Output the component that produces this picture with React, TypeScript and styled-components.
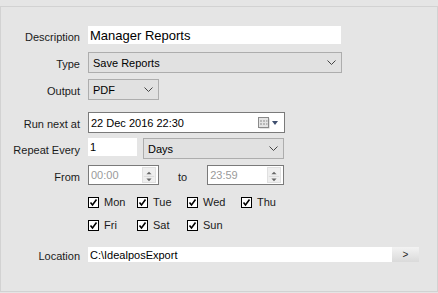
import styled, { createGlobalStyle } from "styled-components";

const GlobalStyle = createGlobalStyle`
  html, body {
    margin: 0;
    padding: 0;
    background: #e5e5e5;
  }
  body {
    font-family: "Liberation Sans", Arial, sans-serif;
    font-size: 11px;
    color: #1a1a1a;
  }
`;

const Chevron = () => (
  <svg width="9" height="5" viewBox="0 0 9 5">
    <polyline points="0.5,0.5 4.5,4.5 8.5,0.5" fill="none" stroke="#444" strokeWidth="1" />
  </svg>
);

const CalendarIcon = () => (
  <svg width="12" height="12" viewBox="0 0 12 12">
    <rect x="1.5" y="1.5" width="10" height="10" fill="#c8c8c8" />
    <rect x="0.5" y="0.5" width="10" height="10" fill="#e4e4e4" stroke="#8a8a8a" />
    <g fill="#b8b8b8">
      <rect x="2" y="3" width="2" height="2" />
      <rect x="5" y="3" width="2" height="2" />
      <rect x="8" y="3" width="1.5" height="2" />
      <rect x="2" y="6" width="2" height="2" />
      <rect x="5" y="6" width="2" height="2" />
      <rect x="8" y="6" width="1.5" height="2" />
    </g>
  </svg>
);

const SpinArrows = () => (
  <svg width="14" height="16" viewBox="0 0 14 16">
    <polygon points="4,6 10,6 7,3" fill="#666" />
    <line x1="1" y1="8.5" x2="13" y2="8.5" stroke="#d6d6d6" />
    <polygon points="4,11 10,11 7,14" fill="#666" />
  </svg>
);

const Check = () => (
  <svg width="9" height="9" viewBox="0 0 9 9">
    <polyline points="1.5,4.5 3.5,7 7.5,1.5" fill="none" stroke="#000" strokeWidth="1.6" />
  </svg>
);

const days = [
  ["Mon", "Tue", "Wed", "Thu"],
  ["Fri", "Sat", "Sun"],
];

export default function App() {
  return (
    <>
      <GlobalStyle />
      <Panel>
        <Row $h={18} $mt={0}>
          <Label>Description</Label>
          <TextInput $w={253} $size={13} value="Manager Reports" readOnly />
        </Row>
        <Row $h={21} $mt={8}>
          <Label>Type</Label>
          <Select $w={254}>
            <span>Save Reports</span>
            <Chevron />
          </Select>
        </Row>
        <Row $h={21} $mt={6}>
          <Label>Output</Label>
          <Select $w={71}>
            <span>PDF</span>
            <Chevron />
          </Select>
        </Row>
        <Row $h={21} $mt={12}>
          <Label>Run next at</Label>
          <DateBox>
            <span>22 Dec 2016 22:30</span>
            <DateButtons>
              <CalendarIcon />
              <DropArrow />
            </DateButtons>
          </DateBox>
        </Row>
        <Row $h={21} $mt={5}>
          <Label>Repeat Every</Label>
          <NumInput value="1" readOnly />
          <Select $w={141} $ml={6}>
            <span>Days</span>
            <Chevron />
          </Select>
        </Row>
        <Row $h={20} $mt={6}>
          <Label>From</Label>
          <TimeBox $w={71}>
            <span>00:00</span>
            <Spinner>
              <SpinArrows />
            </Spinner>
          </TimeBox>
          <ToText>to</ToText>
          <TimeBox $w={77}>
            <span>23:59</span>
            <Spinner>
              <SpinArrows />
            </Spinner>
          </TimeBox>
        </Row>
        {days.map((row, i) => (
          <Row key={i} $h={18} $mt={i === 0 ? 8 : 5}>
            <Label />
            <DayGrid>
              {row.map((d) => (
                <DayItem key={d}>
                  <Box>
                    <Check />
                  </Box>
                  {d}
                </DayItem>
              ))}
            </DayGrid>
          </Row>
        ))}
        <Row $h={15} $mt={13}>
          <Label>Location</Label>
          <TextInput $w={304} $size={11} value="C:\IdealposExport" readOnly />
          <BrowseButton>&gt;</BrowseButton>
        </Row>
      </Panel>
    </>
  );
}

const Panel = styled.div`
  margin-top: 6px;
  height: 286px;
  box-sizing: border-box;
  border: 1px solid #d2d2d2;
  background: #e5e5e5;
  padding-top: 19px;
  display: flex;
  flex-direction: column;
`;

const Row = styled.div<{ $h: number; $mt: number }>`
  display: flex;
  align-items: center;
  height: ${(p) => p.$h}px;
  margin-top: ${(p) => p.$mt}px;
`;

const Label = styled.div`
  width: 79px;
  margin-right: 8px;
  text-align: right;
  padding-top: 3px;
  white-space: nowrap;
  color: #1a1a1a;
`;

const TextInput = styled.input<{ $w: number; $size: number }>`
  width: ${(p) => p.$w}px;
  height: 100%;
  box-sizing: border-box;
  border: none;
  outline: none;
  background: #fff;
  padding: 0 2px;
  font-family: "Liberation Sans", Arial, sans-serif;
  font-size: ${(p) => p.$size}px;
  color: #000;
`;

const Select = styled.div<{ $w: number; $ml?: number }>`
  width: ${(p) => p.$w}px;
  margin-left: ${(p) => p.$ml ?? 0}px;
  height: 100%;
  box-sizing: border-box;
  border: 1px solid #adadad;
  background: #e1e1e1;
  display: flex;
  align-items: center;
  justify-content: space-between;
  padding: 0 5px 0 4px;
  color: #000;
`;

const DateBox = styled.div`
  width: 197px;
  height: 100%;
  box-sizing: border-box;
  border: 1px solid #7a7a7a;
  background: #fff;
  display: flex;
  align-items: center;
  justify-content: space-between;
  padding: 0 6px 0 2px;
  color: #000;
`;

const DateButtons = styled.div`
  display: flex;
  align-items: center;
  gap: 2px;
`;

const DropArrow = styled.div`
  width: 0;
  height: 0;
  border-left: 3.5px solid transparent;
  border-right: 3.5px solid transparent;
  border-top: 4px solid #3f4f6f;
`;

const NumInput = styled.input`
  width: 49px;
  height: 18px;
  align-self: flex-start;
  box-sizing: border-box;
  border: none;
  outline: none;
  background: #fff;
  padding: 0 2px;
  font-family: "Liberation Sans", Arial, sans-serif;
  font-size: 11px;
  color: #000;
`;

const TimeBox = styled.div<{ $w: number }>`
  width: ${(p) => p.$w}px;
  height: 100%;
  box-sizing: border-box;
  border: 1px solid #7a7a7a;
  background: #fff;
  display: flex;
  align-items: center;
  justify-content: space-between;
  padding: 0 2px 0 2px;
  color: #9a9a9a;
`;

const Spinner = styled.div`
  width: 14px;
  height: 16px;
  background: #efefef;
  border: 1px solid #e0e0e0;
  box-sizing: border-box;
  display: flex;
`;

const ToText = styled.span`
  margin: 3px 20px 0 19px;
  color: #1a1a1a;
`;

const DayGrid = styled.div`
  display: grid;
  grid-template-columns: 49px 50px 54px auto;
  align-items: center;
`;

const DayItem = styled.div`
  display: flex;
  align-items: center;
  gap: 5px;
  color: #1a1a1a;
`;

const Box = styled.div`
  width: 11px;
  height: 11px;
  box-sizing: border-box;
  border: 1px solid #000;
  background: #fff;
  display: flex;
  align-items: center;
  justify-content: center;
`;

const BrowseButton = styled.div`
  width: 27px;
  height: 100%;
  display: flex;
  align-items: center;
  justify-content: center;
  background: linear-gradient(#f3f3f3, #dadada);
  font-size: 10px;
  color: #222;
`;
